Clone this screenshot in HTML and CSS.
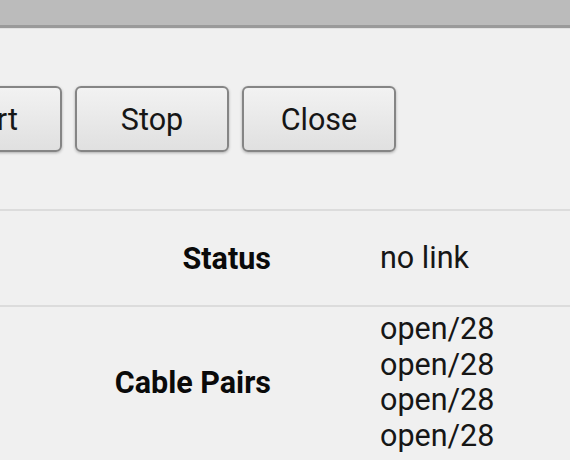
FILE: index.html
```html
<!DOCTYPE html>
<html>
<head>
<meta charset="utf-8">
<link rel="stylesheet" href="styles.css">
</head>
<body>
<div class="titlebar"></div>
<div class="content">
  <div class="buttons">
    <button class="btn">Start</button>
    <button class="btn">Stop</button>
    <button class="btn">Close</button>
  </div>
  <div class="table">
    <div class="row row-status">
      <div class="label">Status</div>
      <div class="value">no link</div>
    </div>
    <div class="row row-pairs">
      <div class="label">Cable Pairs</div>
      <div class="value">
        <div>open/28</div>
        <div>open/28</div>
        <div>open/28</div>
        <div>open/28</div>
      </div>
    </div>
  </div>
</div>
</body>
</html>
```
FILE: styles.css
```css
html, body {
  margin: 0;
  padding: 0;
  background: #f0f0f0;
  overflow: hidden;
  width: 570px;
  height: 460px;
  font-family: Roboto, "Noto Sans", sans-serif;
  color: #161616;
}
.titlebar {
  height: 25px;
  background: #bbbbbb;
  border-bottom: 3px solid #9a9a9a;
  box-shadow: 0 1px 0 #e2e2e2;
}
.content {
  padding-top: 57px;
}
.buttons {
  display: flex;
  gap: 13px;
  margin-left: -92px;
  padding-top: 1px;
}
.btn {
  width: 154px;
  height: 66px;
  box-sizing: border-box;
  border: 2px solid #858585;
  border-radius: 6px;
  background: linear-gradient(#f2f2f2, #e0e0e0);
  box-shadow: 0 1px 3px rgba(0,0,0,0.28);
  font-family: Roboto, sans-serif;
  font-size: 30.5px;
  color: #161616;
  padding: 0;
  flex: none;
}
.table {
  margin-top: 57px;
}
.row {
  display: grid;
  grid-template-columns: 271px 1fr;
  column-gap: 109px;
  border-top: 2px solid #dcdcdc;
  font-size: 30.5px;
}
.row-status {
  height: 94px;
  align-items: center;
}
.row-pairs {
  align-items: center;
  padding-top: 4px;
}
.label {
  font-weight: bold;
  text-align: right;
  color: #0a0a0a;
}
.value {
  line-height: 35.7px;
}
```
